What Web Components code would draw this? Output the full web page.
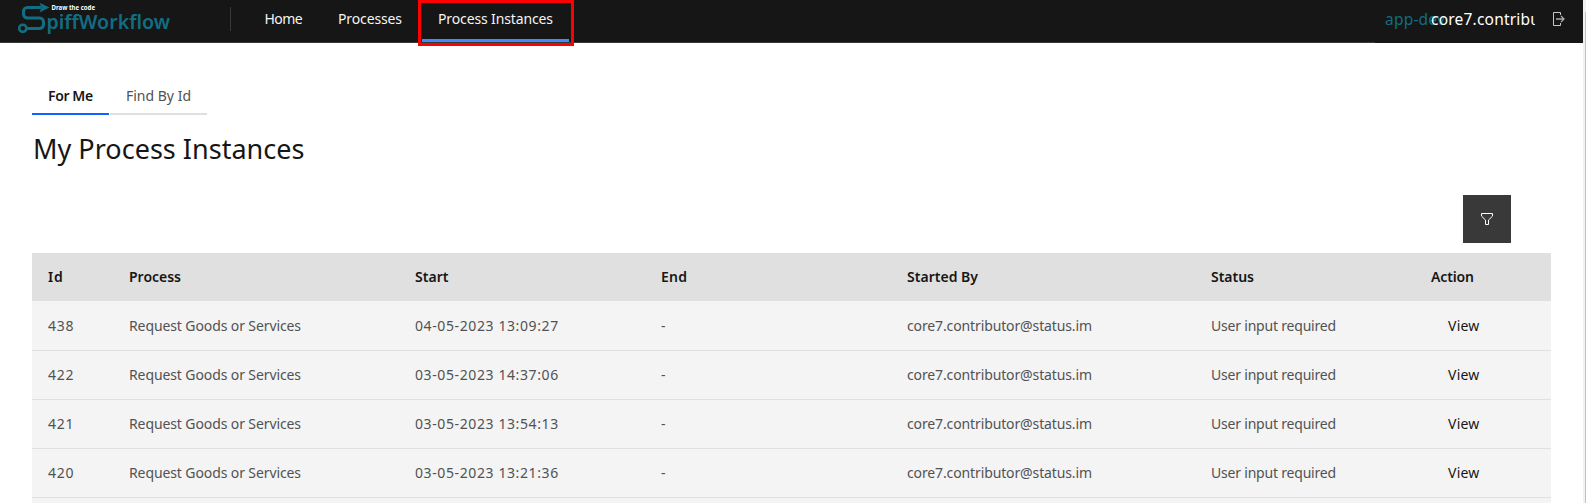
<!DOCTYPE html>
<html lang="en">
<head>
<meta charset="utf-8">
<title>SpiffWorkflow</title>
<style>
body{margin:0;background:#fff;height:503px;overflow:hidden;font-family:"Noto Sans","Open Sans",sans-serif;font-size:14px;color:#161616}
</style>
</head>
<body>
<spiff-app></spiff-app>
<script>
const define = (name, html, init) => customElements.define(name, class extends HTMLElement {
  connectedCallback() {
    if (this.shadowRoot) return;
    const t = document.createElement('template');
    t.innerHTML = html;
    this.attachShadow({mode: 'open'}).append(t.content.cloneNode(true));
    if (init) init.call(this);
  }
});

// A single line of text tracked to a given width.
define('ui-text', `<style>:host{display:inline-block;white-space:pre;vertical-align:top}span{display:inline-block}</style><span><slot></slot></span>`, function () {
  const w = parseFloat(this.getAttribute('w'));
  if (!w) return;
  const span = this.shadowRoot.querySelector('span');
  const n = this.textContent.length;
  const gap = (w - span.getBoundingClientRect().width) / Math.max(1, n - 0.5);
  span.style.letterSpacing = gap.toFixed(3) + 'px';
  this.style.width = w + 'px';
});

define('spiff-logo', `<style>
:host{display:block;width:180px;height:42px;color:#126d82}
svg{display:block}
</style>
<svg width="180" height="42" viewBox="0 0 180 42">
<path d="M41 7.500H27.500a4 4 0 0 0-4 4v2.500a4 4 0 0 0 4 4H39.500a4 4 0 0 1 4 4v2.500a4 4 0 0 1-4 4H27" fill="none" stroke="currentColor" stroke-width="3.100"/>
<path d="M39.500 2.800 49.500 7.500 39.500 12.500 41.500 7.500z" fill="currentColor"/>
<circle cx="22.800" cy="28.300" r="3.600" fill="none" stroke="currentColor" stroke-width="2.600"/>
<text x="51.500" y="10" font-family="Noto Sans" font-size="6.500" font-weight="700" fill="#fff" textLength="43.500" lengthAdjust="spacingAndGlyphs">Draw the code</text>
<text x="46.500" y="29.400" font-family="Noto Sans" font-size="19.500" font-weight="600" fill="currentColor" textLength="123.500" lengthAdjust="spacingAndGlyphs">piffWorkflow</text>
</svg>`);

define('nav-link', `<style>
:host{display:flex;box-sizing:border-box;height:42px;padding:0 16px 4px;align-items:center;color:#f4f4f4;line-height:18px}
:host([active]){position:relative;border-bottom:3px solid #4589ff;padding-bottom:1px}
:host([active])::after{content:"";position:absolute;left:-4px;top:0;width:150px;height:40px;border:3px solid #f00}
</style><slot></slot>`);

define('app-header', `<style>
:host{display:flex;box-sizing:border-box;width:1583px;height:43px;background:linear-gradient(#393939,#393939) 0 42px/1375px 1px no-repeat #161616}
.rule{width:1px;height:24px;margin:7px 17.500px 0 50px;background:#393939}
nav{display:flex}
.processes{padding-left:19.500px;padding-right:20px}
.user{display:flex;margin-left:auto;width:198px;padding-top:8px;height:24px;line-height:22px;font-size:15.500px}
.env{width:46px;color:#126d82;white-space:nowrap}
.name{width:104px;overflow:hidden;color:#fff;position:relative}
svg{margin:3px 0 0 17px}
</style>
<spiff-logo></spiff-logo><div class="rule"></div>
<nav><nav-link><ui-text w="38">Home</ui-text></nav-link><nav-link class="processes"><ui-text w="64">Processes</ui-text></nav-link><nav-link active><ui-text w="115">Process Instances</ui-text></nav-link></nav>
<div class="user"><div class="env"><ui-text w="60">app-dev</ui-text></div><div class="name"><ui-text w="109">core7.contribu</ui-text></div>
<svg width="14" height="16" viewBox="0 0 14 16" fill="none"><path d="M8.500 4V1.500H1.500v13h7V12" stroke="#c6c6c6"/><path d="M4 8h8M9 5l3 3-3 3" stroke="#a8a8a8" stroke-width="1.300"/></svg></div>`);

define('page-tab', `<style>
:host{display:block;box-sizing:border-box;height:40px;padding:12px 16px 0;border-bottom:2px solid #e0e0e0;color:#525252;line-height:18px}
:host([active]){border-color:#0f62fe;color:#161616;font-weight:600}
</style><slot></slot>`);

define('filter-button', `<style>
:host{display:grid;place-items:center;width:48px;height:48px;background:#393939}
</style><svg width="14" height="14" viewBox="0 0 14 14" fill="none" stroke="#fff"><path d="M1.500 1.500h11v2.600L8.500 8v4.500h-3V8L1.500 4.100z"/></svg>`);

const cols = '81px 286px 246px 246px 304px 220px 1fr';
define('table-head', `<style>
:host{display:grid;grid-template-columns:${cols};height:48px;line-height:48px;background:#e0e0e0;font-weight:600;padding-left:16px}
</style><ui-text w="15">Id</ui-text><ui-text w="52">Process</ui-text><ui-text w="33.500">Start</ui-text><ui-text w="26">End</ui-text><ui-text w="71">Started By</ui-text><ui-text w="43">Status</ui-text><ui-text w="43">Action</ui-text>`);

// One process instance; the id and start time come from attributes.
customElements.define('instance-row', class extends HTMLElement {
  connectedCallback() {
    this.attachShadow({mode: 'open'}).innerHTML = `<style>
:host{display:grid;box-sizing:border-box;grid-template-columns:${cols};height:49px;line-height:48px;background:#f4f4f4;border-bottom:1px solid #e0e0e0;color:#525252;padding-left:16px}
:host([first]){height:50px;padding-top:1px}
.view{color:#161616;margin-left:17px}
</style><ui-text w="26">${this.getAttribute('pid')}</ui-text><ui-text w="172">Request Goods or Services</ui-text><ui-text w="143.500">${this.getAttribute('start')}</ui-text><ui-text w="5.500">-</ui-text><ui-text w="185">core7.contributor@status.im</ui-text><ui-text w="125">User input required</ui-text><ui-text w="31.500" class="view">View</ui-text>`;
  }
});

define('spiff-app', `<style>
:host{display:flex;height:503px;overflow:hidden}
.page{width:1583px}
.bar{width:3px;box-sizing:border-box;background:#f1f1f1;padding:12px 0 0 2px}
.thumb{height:491px;background:#c1c1c1}
main{padding:32px 32px 0}
.tabs{display:flex;gap:1px}
h1{margin:16px 0 0;padding:0 0 0 1px;font-size:27px;font-weight:400;line-height:36px;height:36px}
.tools{display:flex;justify-content:flex-end;padding:28px 40px 10px 0}
.next{height:10px;background:#f4f4f4}
</style>
<div class="page"><app-header></app-header><main>
<div class="tabs"><page-tab active><ui-text w="45">For Me</ui-text></page-tab><page-tab><ui-text w="65">Find By Id</ui-text></page-tab></div>
<h1><ui-text w="271.500">My Process Instances</ui-text></h1>
<div class="tools"><filter-button></filter-button></div>
<table-head></table-head>
<instance-row first pid="438" start="04-05-2023 13:09:27"></instance-row>
<instance-row pid="422" start="03-05-2023 14:37:06"></instance-row>
<instance-row pid="421" start="03-05-2023 13:54:13"></instance-row>
<instance-row pid="420" start="03-05-2023 13:21:36"></instance-row>
<div class="next"></div>
</main></div><div class="bar"><div class="thumb"></div></div>`);
</script>
</body>
</html>
